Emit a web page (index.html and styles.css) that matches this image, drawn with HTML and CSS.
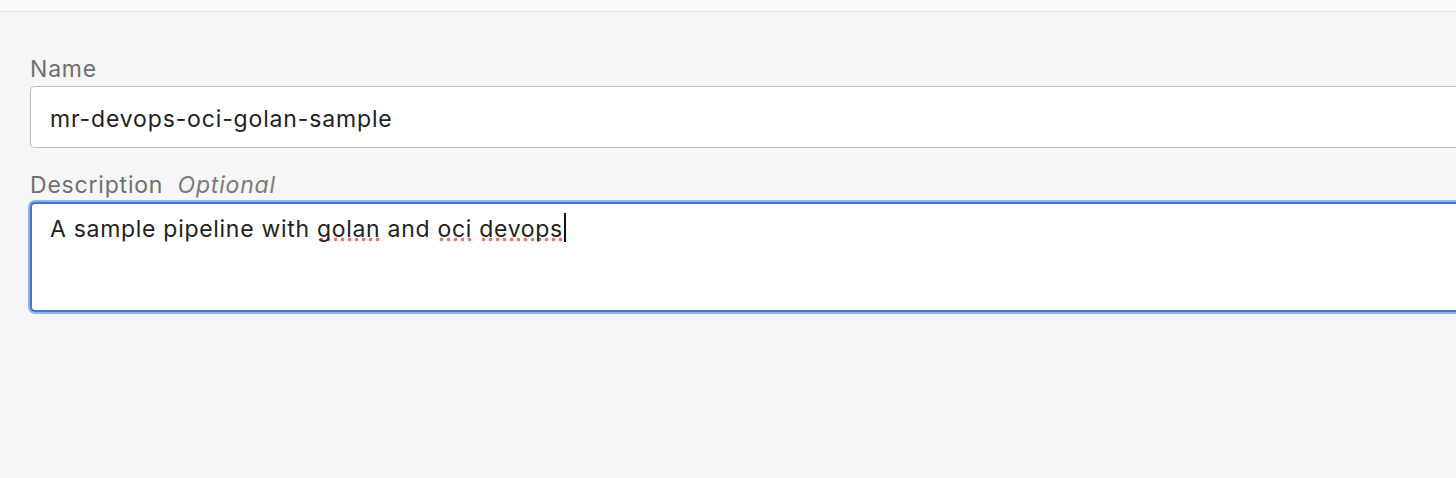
FILE: index.html
```html
<!DOCTYPE html>
<html>
<head>
<meta charset="utf-8">
<link rel="stylesheet" href="styles.css">
</head>
<body>
<div class="topbar"></div>
<main class="form">
  <div class="field">
    <label class="label">Name</label>
    <div class="input">mr-devops-oci-golan-sample</div>
  </div>
  <div class="field">
    <label class="label">Description <span class="optional">Optional</span></label>
    <div class="textarea">A sample pipeline with <span class="spell">golan</span> and <span class="spell">oci</span> <span class="spell">devops</span><span class="caret"></span></div>
  </div>
</main>
</body>
</html>
```
FILE: styles.css
```css
html, body {
  margin: 0;
  padding: 0;
}
body {
  background: #f6f6f6;
  font-family: Inter, "Noto Sans", sans-serif;
  width: 1456px;
  height: 478px;
  overflow: hidden;
}
.topbar {
  height: 11px;
  background: #fafafa;
  border-bottom: 1px solid #e4e4e4;
}
.form {
  padding: 43px 0 0 30px;
  display: flex;
  flex-direction: column;
  gap: 23px;
}
.field {
  display: flex;
  flex-direction: column;
  gap: 3px;
}
.label {
  font-size: 23px;
  line-height: 28px;
  letter-spacing: 0.8px;
  color: #6f6f6f;
}
.optional {
  font-style: italic;
  color: #7b7b7b;
  margin-left: 7px;
}
.input {
  height: 62px;
  box-sizing: border-box;
  background: #fff;
  border: 1px solid #b7bec6;
  border-right: none;
  border-radius: 5px 0 0 5px;
  padding: 18px 0 0 19px;
  font-size: 23px;
  line-height: 28px;
  letter-spacing: 0.85px;
  color: #222;
}
.textarea {
  height: 110px;
  box-sizing: border-box;
  background: #fff;
  border: 2px solid #3c79d3;
  border-right: none;
  box-shadow: 0 0 0 2px #8fb3e6;
  border-radius: 5px 0 0 5px;
  padding: 9px 0 0 18px;
  font-size: 23px;
  line-height: 28px;
  letter-spacing: 0.7px;
  color: #222;
}
.spell {
  background-image: radial-gradient(circle, #f0736a 1.7px, transparent 2.1px);
  background-size: 7px 5px;
  background-repeat: repeat-x;
  background-position: 1px calc(100% - 1px);
}
.caret {
  display: inline-block;
  width: 2px;
  height: 29px;
  margin-left: 1px;
  background: #111;
  vertical-align: -5px;
}
```
